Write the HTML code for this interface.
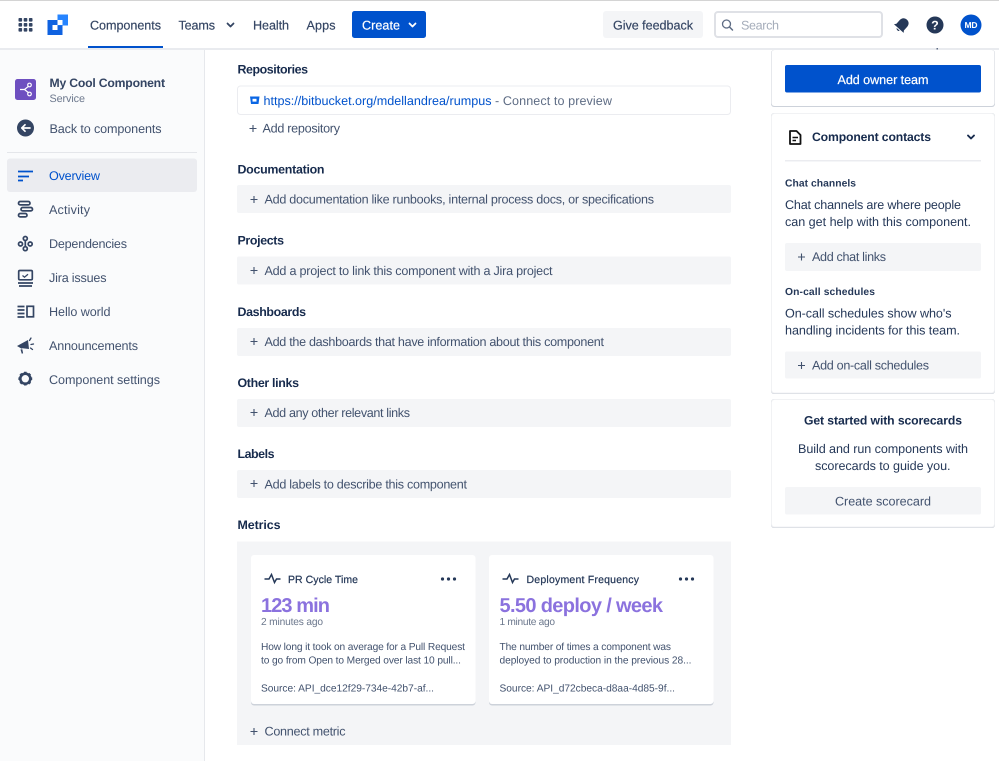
<!DOCTYPE html>
<html lang="en"><head><meta charset="utf-8"><title>My Cool Component</title>
<style>
html,body{margin:0;padding:0;background:#fff;width:999px;height:761px;overflow:hidden}
svg{display:block;position:absolute;left:0;top:0}
text{font-family:"Liberation Sans",sans-serif;font-size:12.6px;fill:#42526E;text-rendering:geometricPrecision}
.b{font-weight:700}
.h{font-weight:700;fill:#172B4D;font-size:12.4px}
.n{fill:#344563;stroke:#344563;stroke-width:.18px}
.d{fill:#253858}
.s{font-size:10.2px}
.w{fill:#fff}
.m{stroke:#253858;stroke-width:.22px}
</style></head><body>
<svg width="999" height="761" viewBox="0 0 999 761" xmlns="http://www.w3.org/2000/svg">
<!-- sidebar -->
<rect x="0" y="48" width="204" height="713" fill="#FAFBFC"/>
<rect x="204" y="48" width="1" height="713" fill="#E6E8EC"/>
<rect x="7" y="152" width="190" height="1" fill="#E4E6EA"/>
<rect x="7" y="158.500" width="190" height="33.500" rx="3" fill="#EBECF0"/>
<!-- top nav -->
<rect x="0" y="0" width="999" height="48" fill="#fff"/>
<rect x="0" y="0" width="999" height="1" fill="#D4D4D4"/>
<rect x="0" y="48" width="999" height="2" fill="#E9EBEF"/>
<rect x="88" y="46" width="75" height="2" fill="#0052CC"/>
<g fill="#344563">
<rect x="18.500" y="18" width="3.600" height="3.600" rx=".8"/><rect x="23.700" y="18" width="3.600" height="3.600" rx=".8"/><rect x="28.900" y="18" width="3.600" height="3.600" rx=".8"/>
<rect x="18.500" y="23" width="3.600" height="3.600" rx=".8"/><rect x="23.700" y="23" width="3.600" height="3.600" rx=".8"/><rect x="28.900" y="23" width="3.600" height="3.600" rx=".8"/>
<rect x="18.500" y="28" width="3.600" height="3.600" rx=".8"/><rect x="23.700" y="28" width="3.600" height="3.600" rx=".8"/><rect x="28.900" y="28" width="3.600" height="3.600" rx=".8"/>
</g>
<rect x="47.500" y="20" width="15" height="15" fill="#0F62E0"/>
<rect x="57.500" y="14.500" width="10.500" height="11" fill="#2684FF"/>
<rect x="52.500" y="25" width="5" height="5" fill="#fff"/>
<rect x="57.500" y="20" width="5" height="5" fill="#fff"/>
<text x="90" y="29.500" textLength="71" class="n">Components</text>
<text x="178.500" y="29.500" textLength="36.500" class="n">Teams</text>
<path d="M227.500 23.500l3 3 3-3" fill="none" stroke="#344563" stroke-width="1.800" stroke-linecap="round" stroke-linejoin="round"/>
<text x="253" y="29.500" textLength="36" class="n">Health</text>
<text x="306.500" y="29.500" textLength="29" class="n">Apps</text>
<rect x="352" y="11" width="74" height="27" rx="2.500" fill="#0052CC"/>
<text x="362" y="29.500" textLength="38" class="w b" style="font-weight:400;stroke:#fff;stroke-width:.2px">Create</text>
<path d="M409.500 23.500l3 3 3-3" fill="none" stroke="#fff" stroke-width="1.800" stroke-linecap="round" stroke-linejoin="round"/>
<rect x="603" y="11" width="100" height="27" rx="3" fill="#F4F5F7"/>
<text x="613" y="29.500" textLength="80" class="n">Give feedback</text>
<rect x="715" y="12" width="167" height="25" rx="3" fill="#fff" stroke="#DFE1E6" stroke-width="2"/>
<circle cx="726.500" cy="24" r="4" fill="none" stroke="#5E6C84" stroke-width="1.300"/>
<path d="M729.500 27l3 3" stroke="#5E6C84" stroke-width="1.500" stroke-linecap="round"/>
<text x="741" y="29.500" textLength="38" style="fill:#A5ADBA">Search</text>
<g transform="translate(902.500 24.500) rotate(42)" fill="#253858">
<path d="M-5 3.500V-1.500C-5-4.500-3-6.500 0-6.500S5-4.500 5-1.500V3.500L6.500 5.500H-6.500Z"/>
<path d="M-2 6.500H2C2 8-1 8.300-2 6.500Z"/>
</g>
<circle cx="935" cy="25" r="8.500" fill="#253858"/>
<text x="935" y="29.500" text-anchor="middle" class="b w" style="font-size:12.500px">?</text>
<circle cx="971" cy="25" r="10.500" fill="#0052CC"/>
<text x="964.500" y="28" textLength="13" class="b w" style="font-size:8.500px">MD</text>
<rect x="936.500" y="48" width="1.500" height="1.500" fill="#5E6C84"/>
<!-- sidebar content -->
<rect x="15" y="79" width="21" height="21" rx="2.500" fill="#6E4FC0"/>
<path d="M20 89.500h4.500l5-4M24.500 89.500l5 4" fill="none" stroke="#fff" stroke-width="1.200"/>
<circle cx="29.500" cy="85" r="1.800" fill="#6E4FC0" stroke="#fff" stroke-width="1.200"/>
<circle cx="29.500" cy="94" r="1.800" fill="#6E4FC0" stroke="#fff" stroke-width="1.200"/>
<text x="49.500" y="87" textLength="115.500" class="b n" style="font-size:12.200px;stroke:none">My Cool Component</text>
<text x="49.500" y="102" textLength="35.500" style="font-size:10.800px;fill:#6B778C">Service</text>
<circle cx="25.500" cy="128" r="8.500" fill="#344563"/>
<path d="M30 128h-8M25 124.800L21.800 128l3.200 3.200" fill="none" stroke="#fff" stroke-width="1.700" stroke-linecap="round" stroke-linejoin="round"/>
<text x="49.500" y="133" textLength="112">Back to components</text>
<path d="M18 171.500h15M18 176.500h11M18 180.500h5" stroke="#0052CC" stroke-width="1.700" fill="none"/>
<text x="49" y="180" textLength="51" style="fill:#0052CC">Overview</text>
<g fill="none" stroke="#344563" stroke-width="1.700">
<rect x="18.500" y="201.500" width="11.500" height="3.400" rx="1.700"/>
<rect x="21" y="207.500" width="11.500" height="3.400" rx="1.700"/>
<rect x="18.500" y="213.500" width="8.500" height="3.400" rx="1.700"/>
<path d="M25.300 240v6.500M23 243.500l-1 .3M27.500 243.500l1 .3"/>
<circle cx="25.300" cy="238.500" r="2"/><circle cx="20.500" cy="244" r="2"/><circle cx="30.200" cy="244" r="2"/><circle cx="25.300" cy="248.700" r="2"/>
<rect x="18.700" y="270.500" width="13.600" height="9.300" rx="1.200"/>
<path d="M18 283h15M19 286h13"/>
<path d="M17.500 306.500h7M17.500 310h7M17.500 313.500h7M17.500 317h7"/>
<rect x="27" y="306.300" width="6.500" height="10.500"/>
</g>
<path d="M22.500 275.500l2 1.700 3.500-3" fill="none" stroke="#344563" stroke-width="1.300"/>
<text x="49" y="214" textLength="41">Activity</text>
<text x="49" y="248" textLength="78">Dependencies</text>
<text x="49" y="282" textLength="57.500">Jira issues</text>
<text x="49" y="316" textLength="61.500">Hello world</text>
<text x="49" y="350" textLength="89">Announcements</text>
<text x="49" y="384" textLength="111">Component settings</text>
<path d="M17 346l11-6 1 9-6.500-.7-1 .3zM20.500 349.500l1.800-.2.8 4-1.300.4z" fill="#344563"/>
<path d="M29.500 340.500l1.500-2.500M31 344.500l2.500-.5M30.500 348l2 1.500" stroke="#344563" stroke-width="1.300" stroke-linecap="round"/>
<circle cx="25.300" cy="378.700" r="5" fill="none" stroke="#344563" stroke-width="2.600"/>
<path d="M25.300 371.800v2.500M25.300 383v2.500M18.400 378.700h2.500M29.700 378.700h2.500M20.400 373.800l1.800 1.800M28.400 381.800l1.800 1.800M20.400 383.600l1.800-1.800M28.400 375.600l1.800-1.800" stroke="#344563" stroke-width="2.600"/>
<!-- main -->
<text x="237.500" y="73.500" textLength="70.500" class="h">Repositories</text>
<rect x="237.500" y="86" width="493" height="28.500" rx="3" fill="#fff" stroke="#EBECF0"/>
<path d="M250 96.500h9.500l-1 7.500h-7.500z" fill="#0A66E4"/><rect x="252.500" y="98.800" width="4" height="2.800" fill="#fff"/>
<text x="263.500" y="105" textLength="228" style="fill:#0052CC">https://bitbucket.org/mdellandrea/rumpus</text>
<text x="495" y="105" textLength="117" style="fill:#5E6C84">- Connect to preview</text>
<path d="M249.500 128.500h7M253 125v7" stroke="#42526E" stroke-width="1.100"/>
<text x="262.500" y="132.500" textLength="77.500">Add repository</text>

<text x="237.500" y="173.500" textLength="87" class="h">Documentation</text>
<rect x="237" y="185" width="494" height="28" rx="2" fill="#F4F5F7"/>
<path d="M250.500 199.500h7M254 196v7" stroke="#42526E" stroke-width="1.100"/>
<text x="264.500" y="203.500" textLength="389.500">Add documentation like runbooks, internal process docs, or specifications</text>

<text x="237.500" y="244.500" textLength="46.500" class="h">Projects</text>
<rect x="237" y="256.500" width="494" height="28" rx="2" fill="#F4F5F7"/>
<path d="M250.500 270.500h7M254 267v7" stroke="#42526E" stroke-width="1.100"/>
<text x="264.500" y="275" textLength="288">Add a project to link this component with a Jira project</text>

<text x="237.500" y="316" textLength="68.500" class="h">Dashboards</text>
<rect x="237" y="328" width="494" height="28" rx="2" fill="#F4F5F7"/>
<path d="M250.500 341.500h7M254 338v7" stroke="#42526E" stroke-width="1.100"/>
<text x="264.500" y="346" textLength="339.500">Add the dashboards that have information about this component</text>

<text x="237.500" y="387" textLength="61.500" class="h">Other links</text>
<rect x="237" y="399" width="494" height="28" rx="2" fill="#F4F5F7"/>
<path d="M250.500 412.500h7M254 409v7" stroke="#42526E" stroke-width="1.100"/>
<text x="264.500" y="417" textLength="145.500">Add any other relevant links</text>

<text x="237.500" y="458" textLength="37" class="h">Labels</text>
<rect x="237" y="470" width="494" height="28" rx="2" fill="#F4F5F7"/>
<path d="M250.500 483.500h7M254 480v7" stroke="#42526E" stroke-width="1.100"/>
<text x="264.500" y="488.500" textLength="202.500">Add labels to describe this component</text>

<text x="237.500" y="529" textLength="43" class="h">Metrics</text>
<rect x="237" y="541.500" width="494" height="203.500" fill="#F4F5F7"/>
<!-- card 1 -->
<rect x="251" y="556" width="224.500" height="149.500" rx="3" fill="#CDD2DA"/>
<rect x="251" y="555" width="224.500" height="149" rx="3" fill="#fff"/>
<path d="M264.500 579h4.500l2.500-4.500 3 8 2-3.500h4" fill="none" stroke="#253858" stroke-width="1.500"/>
<text x="288" y="583" textLength="70" class="d m" style="font-size:10.500px">PR Cycle Time</text>
<g fill="#253858"><circle cx="442.500" cy="579" r="1.600"/><circle cx="448.500" cy="579" r="1.600"/><circle cx="454.500" cy="579" r="1.600"/></g>
<text x="261" y="612" textLength="69" class="b" style="font-size:20px;fill:#8B72DE">123 min</text>
<text x="261" y="625" textLength="62" class="s" style="fill:#6B778C">2 minutes ago</text>
<text x="261" y="650" textLength="204" class="s">How long it took on average for a Pull Request</text>
<text x="261" y="663.500" textLength="200" class="s">to go from Open to Merged over last 10 pull...</text>
<text x="261" y="691.500" textLength="173" class="s">Source: API_dce12f29-734e-42b7-af...</text>
<!-- card 2 -->
<rect x="489" y="556" width="224.500" height="149.500" rx="3" fill="#CDD2DA"/>
<rect x="489" y="555" width="224.500" height="149" rx="3" fill="#fff"/>
<path d="M502.500 579h4.500l2.500-4.500 3 8 2-3.500h4" fill="none" stroke="#253858" stroke-width="1.500"/>
<text x="526.500" y="583" textLength="112.500" class="d m" style="font-size:10.500px">Deployment Frequency</text>
<g fill="#253858"><circle cx="680.500" cy="579" r="1.600"/><circle cx="686.500" cy="579" r="1.600"/><circle cx="692.500" cy="579" r="1.600"/></g>
<text x="499.500" y="612" textLength="163.500" class="b" style="font-size:20px;fill:#8B72DE">5.50 deploy / week</text>
<text x="499.500" y="625" textLength="55.500" class="s" style="fill:#6B778C">1 minute ago</text>
<text x="499.500" y="650" textLength="171.500" class="s">The number of times a component was</text>
<text x="499.500" y="663.500" textLength="192" class="s">deployed to production in the previous 28...</text>
<text x="499.500" y="691.500" textLength="175.500" class="s">Source: API_d72cbeca-d8aa-4d85-9f...</text>
<path d="M250.500 731.500h7M254 728v7" stroke="#42526E" stroke-width="1.100"/>
<text x="264.500" y="735.500" textLength="81">Connect metric</text>
<!-- right column -->
<rect x="771" y="50" width="224" height="57" rx="3" fill="#CDD2DA"/>
<rect x="771.500" y="50" width="223" height="56" rx="3" fill="#fff"/>
<rect x="785" y="65" width="196" height="27.500" rx="2" fill="#0052CC"/>
<text x="837.500" y="84" textLength="91" class="w" style="stroke:#fff;stroke-width:.2px">Add owner team</text>

<rect x="771" y="113" width="224" height="281" rx="3" fill="#CDD2DA"/>
<rect x="771.500" y="113.500" width="223" height="279.500" rx="3" fill="#fff" stroke="#F1F2F4"/>
<path d="M790 131h6.500l4 4v9H790z" fill="none" stroke="#111" stroke-width="1.800" stroke-linejoin="round"/>
<path d="M792.500 137.500h5.500M792.500 140.500h3.500" stroke="#111" stroke-width="1.500"/>
<text x="812" y="141" textLength="119" class="h" style="font-size:12.200px">Component contacts</text>
<path d="M968 135.500l3 3 3-3" fill="none" stroke="#172B4D" stroke-width="1.900" stroke-linecap="round" stroke-linejoin="round"/>
<rect x="785" y="160" width="196" height="1.500" fill="#EBECF0"/>
<text x="785" y="186.500" textLength="71" class="b d" style="font-size:10.300px">Chat channels</text>
<text x="785" y="209" textLength="176" class="d">Chat channels are where people</text>
<text x="785" y="226" textLength="186" class="d">can get help with this component.</text>
<rect x="785" y="243" width="196" height="28" rx="2" fill="#F4F5F7"/>
<path d="M798 257h7M801.500 253.500v7" stroke="#42526E" stroke-width="1.100"/>
<text x="812" y="261" textLength="74">Add chat links</text>
<text x="785" y="295" textLength="90" class="b d" style="font-size:10.300px">On-call schedules</text>
<text x="785" y="317.500" textLength="166.500" class="d">On-call schedules show who's</text>
<text x="785" y="334.500" textLength="175" class="d">handling incidents for this team.</text>
<rect x="785" y="351.500" width="196" height="27" rx="2" fill="#F4F5F7"/>
<path d="M798 365.500h7M801.500 362v7" stroke="#42526E" stroke-width="1.100"/>
<text x="812" y="369.500" textLength="117">Add on-call schedules</text>

<rect x="771" y="399" width="224" height="129" rx="3" fill="#CDD2DA"/>
<rect x="771.500" y="399.500" width="223" height="127.500" rx="3" fill="#fff" stroke="#F1F2F4"/>
<text x="804" y="424.500" textLength="158" class="h" style="font-size:12.200px">Get started with scorecards</text>
<text x="798" y="453" textLength="170" class="d">Build and run components with</text>
<text x="815" y="470" textLength="135.500" class="d">scorecards to guide you.</text>
<rect x="785" y="487" width="196" height="27.500" rx="2" fill="#F4F5F7"/>
<text x="835" y="505.500" textLength="96">Create scorecard</text>
</svg>
</body></html>
